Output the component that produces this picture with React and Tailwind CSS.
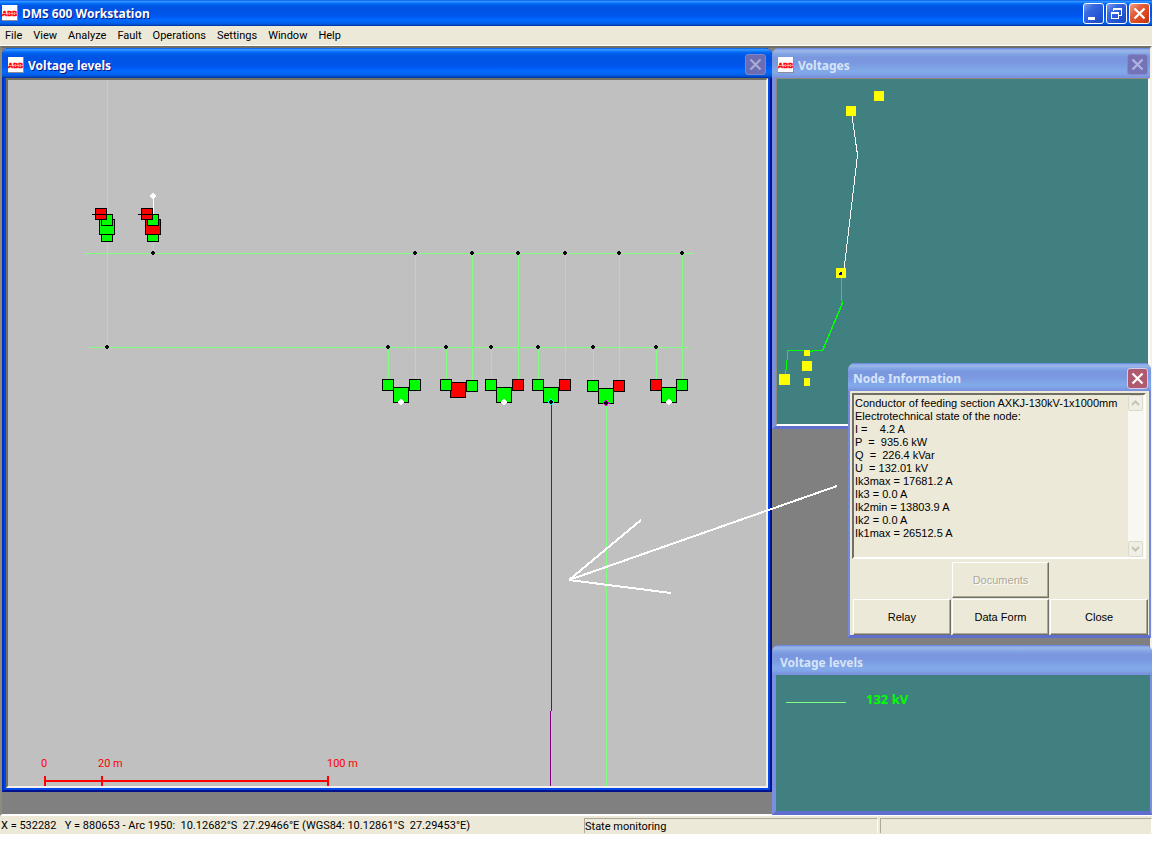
import React from "react";

const UI = "font-[Roboto,sans-serif]";
const ACTIVE =
  "bg-[linear-gradient(#0058ee_0%,#3593ff_5%,#288eff_8%,#036ffc_13%,#0262ee_17%,#0057e5_24%,#0054e3_32%,#0055eb_56%,#005bf5_66%,#026afe_76%,#0062ef_88%,#0052d6_94%,#003092_100%)]";
const INACTIVE =
  "bg-[linear-gradient(#5f7fdc_0%,#94afe8_6%,#97b4e9_12%,#82a5e4_20%,#7996de_32%,#7b99e1_52%,#82a9e9_76%,#80a5e7_86%,#7b96e1_94%,#7a8fdf_100%)]";

function AbbIcon() {
  return (
    <svg className="h-4 w-4 shrink-0" viewBox="0 0 16 16" aria-hidden="true">
      <rect width="16" height="16" fill="#8a8a9a" />
      <rect width="15" height="15" fill="#fff" />
      <text x="7.5" y="11" textAnchor="middle" fontFamily="Liberation Sans, sans-serif" fontWeight="700" fontSize="7" fill="#f00" stroke="#f00" strokeWidth="0.6">
        ABB
      </text>
      <path d="M0 8.5H15" stroke="#fff" strokeWidth="0.5" />
      <path d="M5.300 5v7M10.300 5v7" stroke="#fff" strokeWidth="0.3" />
    </svg>
  );
}

function Glyph({ kind }) {
  if (kind === "min") return <path d="M5 15.500h7" stroke="#fff" strokeWidth="3" />;
  if (kind === "restore")
    return (
      <path d="M8 5.500h8M7.500 5v3M15.500 5v7M13 12.500h3M5 9.500h8M5 10.500h8M5.500 9v7M12.500 9v7M5 15.500h8M8 6.500h8" stroke="#fff" fill="none" shapeRendering="crispEdges" />
    );
  return <path d="M5.500 5.500l10 10M15.500 5.500l-10 10" stroke="currentColor" strokeWidth="2.200" />;
}

function CaptionButton({ kind, label, tone }) {
  const tones = {
    blue: "border-white bg-[linear-gradient(135deg,#7d9ff0_0%,#3a6ae0_30%,#2456d6_65%,#1a48c4_100%)] text-white",
    red: "border-white bg-[linear-gradient(135deg,#f0a088_0%,#e2603c_35%,#d9441c_70%,#b83410_100%)] text-white",
    dim: "border-[#7f86c8] bg-[#6a6cb4] text-[#a9abd4]",
    pale: "border-[#8287cf] bg-[#7573b8] text-[#b1b4e2]",
    rose: "border-[#d3cdea] bg-[#b05a70] text-white",
  };
  return (
    <button type="button" aria-label={label} className={`h-[21px] w-[21px] shrink-0 rounded-[3px] border ${tones[tone]}`}>
      <svg className="-m-px h-[21px] w-[21px]" viewBox="0 0 21 21">
        <Glyph kind={kind} />
      </svg>
    </button>
  );
}

function Title({ children, active }) {
  return (
    <h2
      className={`min-w-0 flex-1 truncate pt-[2px] font-['Noto_Sans',sans-serif] text-[12px] leading-4 font-bold ${
        active ? "text-white [text-shadow:1px_1px_#0a1883]" : "text-[#d8e4f8]"
      }`}
    >
      {children}
    </h2>
  );
}

function Dot({ x, y, color = "#000" }) {
  return <path d={`M${x - 1} ${y - 2}h2v1h1v2h-1v1h-2v-1h-1v-2h1z`} fill={color} />;
}

function BigDot({ x, y, color }) {
  return <path d={`M${x - 1} ${y - 3}h2v1h1v1h1v2h-1v1h-1v1h-2v-1h-1v-1h-1v-2h1v-1h1z`} fill={color} />;
}

function Box({ x, y, s, red }) {
  return <rect x={x + 0.5} y={y + 0.5} width={s - 1} height={s - 1} fill={red ? "#f00" : "#0f0"} stroke="#000" />;
}

const LINE = "#80ff80";

const bays = [
  { l: 388, r: 415, big: 393, y: 387, node: "white" },
  { l: 446, r: 472, big: 450, y: 382, ry: 380, bigRed: true },
  { l: 491, r: 518, big: 496, y: 387, rRed: true, node: "white" },
  { l: 538, r: 565, big: 543, y: 387, rRed: true, node: "cyan" },
  { l: 593, r: 619, big: 598, y: 388, ly: 380, ry: 380, rRed: true, node: "magenta" },
  { l: 656, r: 682, big: 661, y: 387, lRed: true, node: "white" },
];

function Bay({ l, r, big, y, ly = 379, ry = 379, lRed, rRed, bigRed, node }) {
  return (
    <g>
      <path d={`M${l + 0.5} 347V${ly}M${r + 0.5} 253V${ry}`} stroke={LINE} />
      <Box x={big} y={y} s={16} red={bigRed} />
      <Box x={l - 6} y={ly} s={12} red={lRed} />
      <Box x={r - 6} y={ry} s={12} red={rRed} />
      {node && <BigDot x={big + 8} y={y + 15} color={node === "white" ? "#fff" : node === "cyan" ? "#0ff" : "#f0f"} />}
      {node && node !== "white" && <Dot x={big + 8} y={y + 15} />}
      <Dot x={l} y={347} />
      <Dot x={r} y={253} />
    </g>
  );
}

function Feeder({ x, red }) {
  return (
    <g>
      <Box x={x - 6} y={230} s={12} />
      <Box x={x - 8} y={219} s={16} red={red} />
      <Box x={x - 6} y={214} s={12} />
      <Box x={x - 12} y={208} s={12} red />
      <path d={`M${x - 15} 214.500H${x}`} stroke="#000" />
    </g>
  );
}

function NetworkMap() {
  return (
    <svg className="block h-full w-full" viewBox="8 80 758 706" preserveAspectRatio="xMinYMin meet" shapeRendering="crispEdges" role="img" aria-label="Network diagram">
      <g stroke={LINE} fill="none">
        <path d="M107.500 80V347M85 253.500H694M89 347.500H689M153.500 242V253M606.500 403V786" />
      </g>
      <path d="M153.500 196V216" stroke="#fff" />
      <path d="M551.500 403V711M550.500 711V786" stroke="#800080" />
      <Feeder x={107} />
      <Feeder x={153} red />
      <BigDot x={153} y={196} color="#fff" />
      <Dot x={153} y={253} />
      <Dot x={107} y={347} />
      {bays.map((b) => (
        <Bay key={b.l} {...b} />
      ))}
      <path d="M44 780h285v2h-285zM44 776h2v10h-2zM101 776h2v10h-2zM327 776h2v10h-2z" fill="#f00" />
      <g fill="#f00" fontFamily="Roboto, sans-serif" fontSize="11">
        <text x="41" y="767">0</text>
        <text x="98" y="767">20 m</text>
        <text x="327" y="767">100 m</text>
      </g>
    </svg>
  );
}

function VoltageMap() {
  return (
    <svg className="block h-full w-full" viewBox="777 79 371 345" preserveAspectRatio="xMinYMin meet" shapeRendering="crispEdges" role="img" aria-label="Voltage overview">
      <path d="M852 116L857.500 155L844 270" stroke="#fff" fill="none" />
      <path d="M841.500 278V298L842.500 303L822.500 350.500H815L810 351.500M805 350.500H788L785.500 375" stroke="#0f0" fill="none" />
      <path d="M842.500 303L822.500 350.500" stroke="#0f0" strokeWidth="1.500" />
      <path d="M874 91h10v10h-10zM846 106h10v10h-10zM836 268h10v10h-10zM804 350h6v6h-6zM802 361h10v10h-10zM779 374h11v11h-11zM804 378h6v8h-6z" fill="#ff0" />
      <path d="M839 273h1v-1h2v3h-3z" fill="#00a" />
    </svg>
  );
}

function Raised({ children, disabled, className = "" }) {
  return (
    <button
      type="button"
      disabled={disabled}
      className={`h-9 border border-t-white border-r-[#716f64] border-b-[#716f64] border-l-white bg-[#ece9d8] text-center shadow-[inset_-1px_-1px_#aca899] ${
        disabled ? "text-[#aca899] [text-shadow:1px_1px_#fff]" : "text-black"
      } ${className}`}
    >
      {children}
    </button>
  );
}

function ScrollArrow({ up }) {
  return (
    <button type="button" disabled aria-label={up ? "Scroll up" : "Scroll down"} className="flex h-4 w-[15px] items-center justify-center rounded-[2px] border border-[#dcdacb] bg-[#f0efe6]">
      <svg className="h-2 w-[9px]" viewBox="0 0 9 8">
        <path d={up ? "M1 6l3.500-3.500L8 6" : "M1 2l3.500 3.500L8 2"} fill="none" stroke="#c6c4b6" strokeWidth="2" />
      </svg>
    </button>
  );
}

const report = [
  "Conductor of feeding section AXKJ-130kV-1x1000mm",
  "Electrotechnical state of the node:",
  "I =    4.2 A",
  "P  =  935.6 kW",
  "Q  =  226.4 kVar",
  "U  = 132.01 kV",
  "Ik3max = 17681.2 A",
  "Ik3 = 0.0 A",
  "Ik2min = 13803.9 A",
  "Ik2 = 0.0 A",
  "Ik1max = 26512.5 A",
];

const menus = ["File", "View", "Analyze", "Fault", "Operations", "Settings", "Window", "Help"];

export default function App() {
  return (
    <div className={`relative flex h-screen flex-col overflow-hidden bg-white pb-[30px] text-[11px] text-black ${UI}`}>
      <header className={`flex h-[26px] shrink-0 items-center gap-1 pr-[2px] pl-[2px] ${ACTIVE}`}>
        <AbbIcon />
        <Title active>DMS 600 Workstation</Title>
        <div className="flex gap-[2px]">
          <CaptionButton kind="min" label="Minimize" tone="blue" />
          <CaptionButton kind="restore" label="Restore" tone="blue" />
          <CaptionButton kind="close" label="Close application" tone="red" />
        </div>
      </header>

      <nav className="flex h-5 shrink-0 items-center border-b border-white bg-[#ece9d8]">
        {menus.map((m) => (
          <button key={m} type="button" className="pr-[6px] pl-[5px] leading-4">
            {m}
          </button>
        ))}
      </nav>

      <main className="relative min-h-0 flex-1 overflow-hidden border-2 border-t-[#716f64] border-r-[#f4f2e8] border-b-white border-l-[#8d8b7d] bg-[#808080]">
        <section className="absolute top-0 right-[378px] bottom-[22px] left-0 flex flex-col rounded-t-[7px] border-2 border-t-0 border-r-[#00138c] border-b-[#00138c] border-l-[#0030c0] bg-[#0046e8] px-[2px] pb-[2px]">
          <div className={`-mx-1 flex h-[30px] shrink-0 items-center gap-1 rounded-t-[7px] pt-[3px] pr-[6px] pl-[6px] ${ACTIVE}`}>
            <AbbIcon />
            <Title active>Voltage levels</Title>
            <CaptionButton kind="close" label="Close Voltage levels" tone="dim" />
          </div>
          <div className="min-h-0 flex-1 border-2 border-t-[#716f64] border-r-[#f4f2e8] border-b-[#f4f2e8] border-l-[#716f64] bg-[#c0c0c0]">
            <NetworkMap />
          </div>
        </section>

        <section className="absolute top-0 -right-[2px] flex h-[381px] w-[380px] flex-col rounded-t-[7px] border-4 border-t-0 border-r-2 border-b-[3px] border-[#7a8fdf] border-b-[#5f6fcf] bg-[#7a8fdf]">
          <div className={`-mx-1 flex h-[30px] shrink-0 items-center gap-1 rounded-t-[7px] pt-[3px] pr-[6px] pl-[6px] ${INACTIVE}`}>
            <AbbIcon />
            <Title>Voltages</Title>
            <CaptionButton kind="close" label="Close Voltages" tone="pale" />
          </div>
          <div className="min-h-0 flex-1 border border-r-2 border-b-2 border-t-[#8c8a7c] border-r-white border-b-white border-l-[#8c8a7c] bg-[#408080]">
            <VoltageMap />
          </div>
        </section>
      </main>

      <footer className="flex h-[18px] shrink-0 items-start bg-[#ece9d8]">
        <p className="w-[584px] truncate pt-[2px] pl-px leading-4 whitespace-pre">
          {"X = 532282   Y = 880653 - Arc 1950:  10.12682°S  27.29466°E (WGS84: 10.12861°S  27.29453°E)"}
        </p>
        <p className="mt-[2px] h-[15px] w-[294px] border border-t-[#aca899] border-r-white border-b-0 border-l-[#aca899] leading-4">State monitoring</p>
        <p className="mt-[2px] ml-[2px] h-[15px] flex-1 border border-t-[#aca899] border-r-white border-b-0 border-l-[#aca899]" />
      </footer>

      <section className="absolute top-[645px] right-0 flex h-[170px] w-[380px] flex-col rounded-t-[7px] border-4 border-t-0 border-r-2 border-[#7a8fdf] border-b-[#5f6fcf] bg-[#408080]">
        <div className={`-mr-[2px] -ml-1 flex h-[30px] shrink-0 items-center rounded-t-[7px] pt-1 pl-2 ${INACTIVE}`}>
          <Title>Voltage levels</Title>
        </div>
        <div className="flex h-[50px] items-center gap-5 pl-[10px]">
          <span className="mt-1 h-px w-[60px] bg-[#80ff80]" />
          <span className="font-['Noto_Sans',sans-serif] text-[13px] font-bold text-[#0f0]">132 kV</span>
        </div>
      </section>

      <section
        role="dialog"
        aria-label="Node Information"
        className="absolute top-[363px] right-px flex h-[275px] w-[303px] flex-col rounded-t-[7px] border-2 border-t-0 border-b-[3px] border-[#7488dc] border-b-[#5f6fcf] bg-[#ece9d8] font-['Liberation_Sans',sans-serif] leading-[13px]"
      >
        <div className={`-mx-[2px] flex h-7 shrink-0 items-center rounded-t-[7px] pt-[2px] pr-[3px] pl-[5px] ${INACTIVE}`}>
          <Title>Node Information</Title>
          <CaptionButton kind="close" label="Close Node Information" tone="rose" />
        </div>
        <div className="flex flex-1 flex-col pt-[2px] pr-px pl-[3px]">
          <div className="-ml-px mr-[2px] flex h-[166px] border-2 border-t-[#716f64] border-r-white border-b-white border-l-[#716f64]">
            <div className="flex-1 pt-[2px] pl-px whitespace-pre">
              {report.map((line) => (
                <p key={line}>{line}</p>
              ))}
            </div>
            <div className="flex w-4 flex-col justify-between bg-[#f8f7f1]">
              <ScrollArrow up />
              <ScrollArrow />
            </div>
          </div>
          <div className="mt-[3px] grid grid-cols-3 gap-x-px gap-y-px">
            <Raised disabled className="col-start-2">
              Documents
            </Raised>
            <Raised className="col-start-1">Relay</Raised>
            <Raised>Data Form</Raised>
            <Raised>Close</Raised>
          </div>
        </div>
      </section>

      <svg className="pointer-events-none absolute top-[480px] left-[560px] h-[120px] w-[290px]" viewBox="560 480 290 120" shapeRendering="crispEdges" aria-hidden="true">
        <path d="M837 486L569 580L641 520M569 580L671 593" fill="none" stroke="#fff" strokeWidth="2" />
      </svg>
    </div>
  );
}
